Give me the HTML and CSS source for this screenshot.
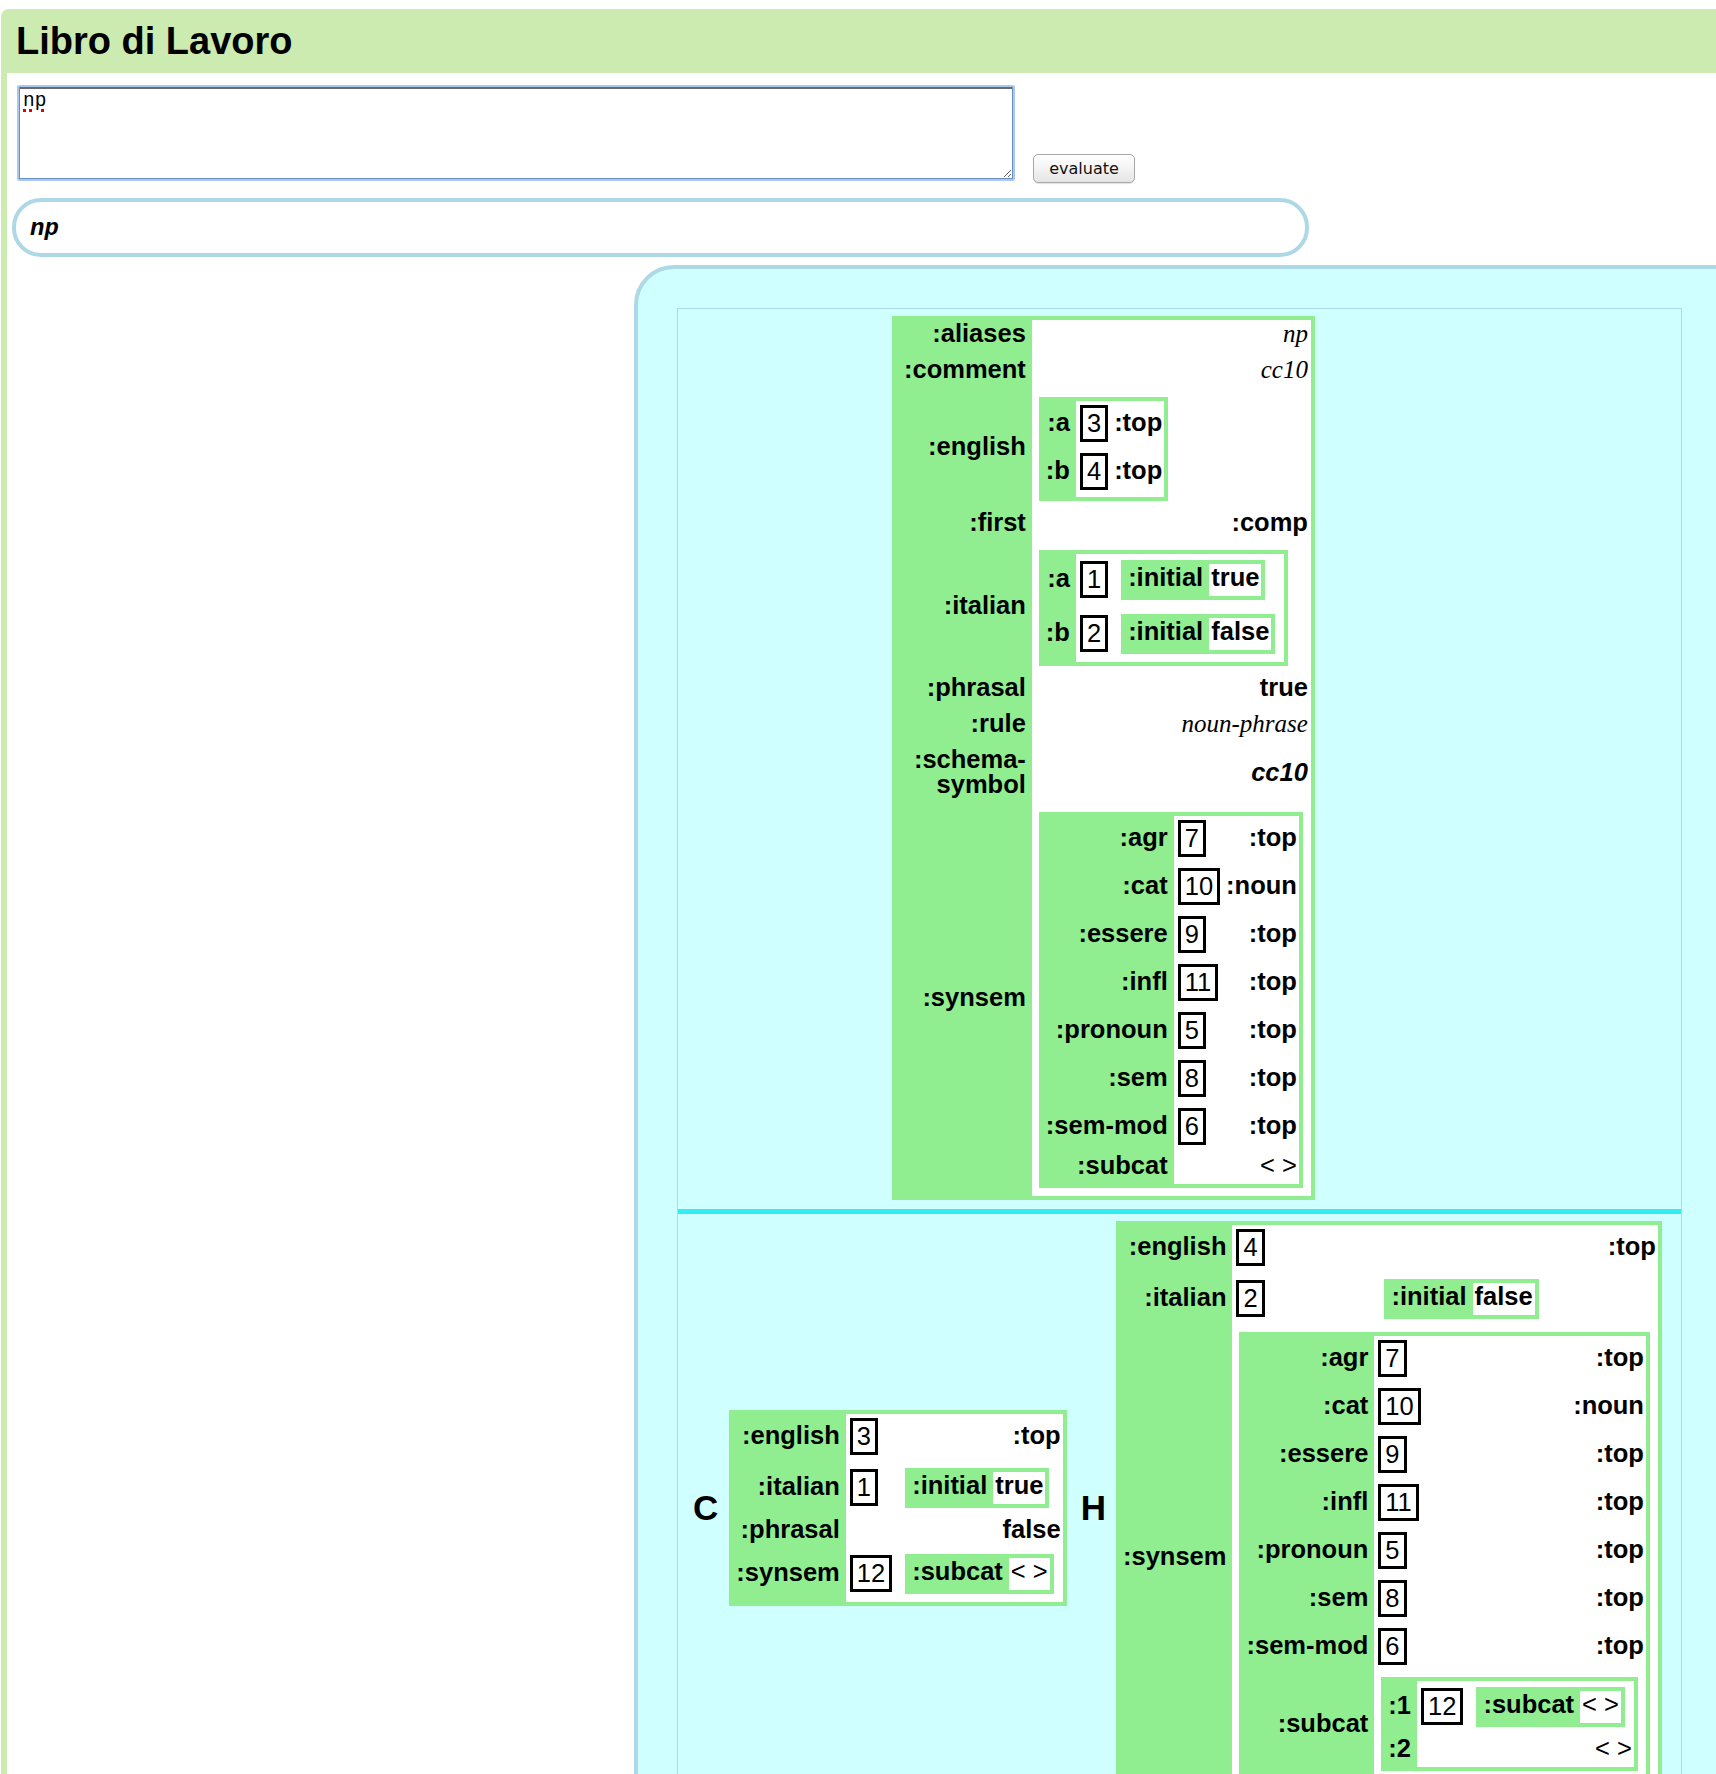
FILE: index.html
```html
<!DOCTYPE html>
<html lang="it">
<head>
<meta charset="utf-8">
<title>Libro di Lavoro</title>
<link rel="stylesheet" href="styles.css">
</head>
<body>
<div class="page">
  <h1 class="title">Libro di Lavoro</h1>
  <div class="main">
    <div class="input-row">
      <textarea class="code" spellcheck="false">np</textarea>
      <button class="eval" type="button">evaluate</button>
    </div>
    <div class="result"><i>np</i></div>
    <div class="panel">
      <div class="tree">
        <div class="mother">
          <table class="avm avm-top">
            <tr><th class="k">:aliases</th><td class="v"><i class="str">np</i></td></tr>
            <tr><th class="k">:comment</th><td class="v"><i class="str">cc10</i></td></tr>
            <tr><th class="k">:english</th><td class="w">
              <table class="avm">
                <tr><th class="k">:a</th><td class="r"><span class="ix">3</span></td><td class="v">:top</td></tr>
                <tr><th class="k">:b</th><td class="r"><span class="ix">4</span></td><td class="v">:top</td></tr>
              </table>
            </td></tr>
            <tr><th class="k">:first</th><td class="v">:comp</td></tr>
            <tr><th class="k">:italian</th><td class="w">
              <table class="avm">
                <tr><th class="k">:a</th><td class="r"><span class="ix">1</span></td><td class="n">
                  <table class="avm"><tr><th class="k">:initial</th><td class="v">true</td></tr></table>
                </td></tr>
                <tr><th class="k">:b</th><td class="r"><span class="ix">2</span></td><td class="n">
                  <table class="avm"><tr><th class="k">:initial</th><td class="v">false</td></tr></table>
                </td></tr>
              </table>
            </td></tr>
            <tr><th class="k">:phrasal</th><td class="v">true</td></tr>
            <tr><th class="k">:rule</th><td class="v"><i class="str">noun-phrase</i></td></tr>
            <tr><th class="k">:schema-<br>symbol</th><td class="v"><i class="sym">cc10</i></td></tr>
            <tr><th class="k">:synsem</th><td class="w">
              <table class="avm">
                <tr><th class="k">:agr</th><td class="r"><span class="ix">7</span></td><td class="v">:top</td></tr>
                <tr><th class="k">:cat</th><td class="r"><span class="ix">10</span></td><td class="v">:noun</td></tr>
                <tr><th class="k">:essere</th><td class="r"><span class="ix">9</span></td><td class="v">:top</td></tr>
                <tr><th class="k">:infl</th><td class="r"><span class="ix">11</span></td><td class="v">:top</td></tr>
                <tr><th class="k">:pronoun</th><td class="r"><span class="ix">5</span></td><td class="v">:top</td></tr>
                <tr><th class="k">:sem</th><td class="r"><span class="ix">8</span></td><td class="v">:top</td></tr>
                <tr><th class="k">:sem-mod</th><td class="r"><span class="ix">6</span></td><td class="v">:top</td></tr>
                <tr><th class="k">:subcat</th><td class="r"></td><td class="v"><span class="nil">&lt; &gt;</span></td></tr>
              </table>
            </td></tr>
          </table>
        </div>
        <div class="divider"></div>
        <div class="children">
          <div class="head head-c">C</div>
          <table class="avm">
            <tr><th class="k">:english</th><td class="r"><span class="ix">3</span></td><td class="v">:top</td></tr>
            <tr><th class="k">:italian</th><td class="r"><span class="ix">1</span></td><td class="n">
              <table class="avm"><tr><th class="k">:initial</th><td class="v">true</td></tr></table>
            </td></tr>
            <tr><th class="k">:phrasal</th><td class="r"></td><td class="v">false</td></tr>
            <tr><th class="k">:synsem</th><td class="r"><span class="ix">12</span></td><td class="n">
              <table class="avm"><tr><th class="k">:subcat</th><td class="v"><span class="nil">&lt; &gt;</span></td></tr></table>
            </td></tr>
          </table>
          <div class="head head-h">H</div>
          <table class="avm">
            <tr><th class="k">:english</th><td class="r r-wide"><span class="ix">4</span></td><td class="v">:top</td></tr>
            <tr><th class="k">:italian</th><td class="r r-wide"><span class="ix">2</span></td><td class="n">
              <table class="avm"><tr><th class="k">:initial</th><td class="v">false</td></tr></table>
            </td></tr>
            <tr><th class="k">:synsem</th><td class="w" colspan="2">
              <table class="avm">
                <tr><th class="k">:agr</th><td class="r"><span class="ix">7</span></td><td class="v">:top</td></tr>
                <tr><th class="k">:cat</th><td class="r"><span class="ix">10</span></td><td class="v">:noun</td></tr>
                <tr><th class="k">:essere</th><td class="r"><span class="ix">9</span></td><td class="v">:top</td></tr>
                <tr><th class="k">:infl</th><td class="r"><span class="ix">11</span></td><td class="v">:top</td></tr>
                <tr><th class="k">:pronoun</th><td class="r"><span class="ix">5</span></td><td class="v">:top</td></tr>
                <tr><th class="k">:sem</th><td class="r"><span class="ix">8</span></td><td class="v">:top</td></tr>
                <tr><th class="k">:sem-mod</th><td class="r"><span class="ix">6</span></td><td class="v">:top</td></tr>
                <tr><th class="k">:subcat</th><td class="w" colspan="2">
                  <table class="avm">
                    <tr><th class="k">:1</th><td class="r"><span class="ix">12</span></td><td class="n">
                      <table class="avm"><tr><th class="k">:subcat</th><td class="v"><span class="nil">&lt; &gt;</span></td></tr></table>
                    </td></tr>
                    <tr><th class="k">:2</th><td class="r"></td><td class="v"><span class="nil">&lt; &gt;</span></td></tr>
                  </table>
                </td></tr>
              </table>
            </td></tr>
          </table>
        </div>
      </div>
    </div>
  </div>
</div>
</body>
</html>
```

FILE: styles.css
```css
html {
  overflow: hidden;
}
html, body {
  margin: 0;
  padding: 0;
}
body {
  background: #ffffff;
  color: #000000;
  font-family: "Liberation Sans", Arial, sans-serif;
}

.page {
  margin: 9px 0 0 1px;
  padding-left: 6px;
  background: #cbebb0;
  border-top-left-radius: 8px;
}

.title {
  margin: 0;
  height: 64px;
  padding-left: 9px;
  font-size: 38px;
  line-height: 64px;
  font-weight: bold;
}

.main {
  background: #ffffff;
  padding: 14px 0 60px 0;
  overflow: hidden;
}

/* input row */
.input-row {
  display: flex;
  align-items: flex-start;
  margin-left: 12px;
}
.code {
  box-sizing: border-box;
  width: 994px;
  height: 92px;
  margin: 0;
  padding: 1px 3px;
  border: 1px solid #6a8fc4;
  border-top: 2px solid #6b6b6b;
  border-radius: 1px;
  box-shadow: 0 0 0 2px #a9c8ee;
  outline: none;
  font-family: "Liberation Mono", "Courier New", monospace;
  font-size: 19.5px;
  line-height: 22px;
  color: #000;
  text-decoration: underline dotted #e80000;
  text-decoration-thickness: 3px;
  text-underline-offset: 3px;
}
.eval {
  box-sizing: border-box;
  width: 102px;
  height: 29px;
  margin: 67px 0 0 20px;
  padding: 0;
  border: 1px solid #a8a8a8;
  border-radius: 5px;
  background: linear-gradient(#ffffff, #f3f3f3 50%, #e4e4e4);
  box-shadow: 0 1px 1px rgba(0, 0, 0, 0.12);
  font-family: "DejaVu Sans", "Liberation Sans", sans-serif;
  font-size: 16px;
  color: #111;
}

/* result */
.result {
  box-sizing: border-box;
  width: 1297px;
  height: 59px;
  margin: 15px 0 0 5px;
  padding-left: 14px;
  border: 4px solid #add8e6;
  border-radius: 29px;
  font-family: "Liberation Mono", "Courier New", monospace;
  font-size: 24px;
  font-weight: bold;
  line-height: 53px;
}

/* panel */
.panel {
  box-sizing: border-box;
  width: 1091px;
  margin: 8px 0 0 627px;
  padding: 39px;
  border: 4px solid #add8e6;
  border-top-left-radius: 40px;
  background: #cfffff;
}
.tree {
  border: 1px solid #add8e6;
}
.mother {
  padding: 7px 0 9px 214px;
}
.divider {
  height: 5px;
  background: #33eeee;
}
.children {
  display: flex;
  align-items: center;
  padding: 7px 0 8px;
}
.head {
  font-size: 35px;
  font-weight: bold;
  line-height: 40px;
}
.head-c {
  padding: 0 11px 0 15px;
}
.head-h {
  padding: 0 10px 0 14px;
}

/* attribute-value matrices */
.avm {
  border-collapse: separate;
  border-spacing: 0;
  border: 4px solid #90ee90;
  background: #90ee90;
  font-size: 25.5px;
  line-height: 25px;
  font-weight: bold;
}
.avm th,
.avm td {
  padding: 1px 2px 6px;
  vertical-align: middle;
}
.avm .k {
  padding-left: 3px;
  padding-right: 6px;
  text-align: right;
  white-space: nowrap;
}
.avm .r {
  padding: 4px 4px 7px;
  background: #ffffff;
  text-align: left;
  white-space: nowrap;
}
.avm .r-wide {
  width: 135px;
}
.avm .v {
  background: #ffffff;
  text-align: right;
  white-space: nowrap;
}
.avm .n {
  background: #ffffff;
  text-align: left;
}
.avm .w {
  padding: 1px 8px 6px 7px;
  background: #ffffff;
  text-align: left;
}
.n > .avm {
  margin: 5px 7px 2px;
}
.w > .avm {
  margin: 4px 0 2px;
}

.avm-top > tbody > tr > .k {
  padding-left: 8px;
  padding-bottom: 10px;
}
.avm-top > tbody > tr > .v {
  padding-right: 3px;
  padding-bottom: 10px;
}

.ix {
  display: inline-block;
  padding: 3px 4px;
  border: 3px solid #000;
  background: #ffffff;
  font-weight: normal;
  line-height: 25px;
}
.nil {
  font-weight: normal;
}
.str {
  font-family: "Liberation Serif", "Times New Roman", serif;
  font-size: 25px;
  font-style: italic;
  font-weight: normal;
}
.sym {
  font-style: italic;
}
```
